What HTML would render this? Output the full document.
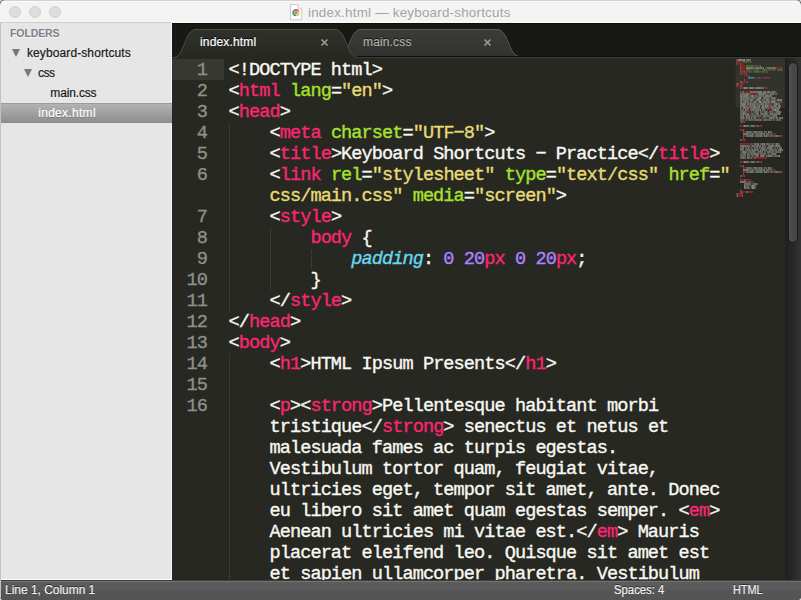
<!DOCTYPE html>
<html>
<head>
<meta charset="utf-8">
<style>
*{box-sizing:border-box;margin:0;padding:0}
html,body{width:801px;height:600px;overflow:hidden;background:#dcdcdc;font-family:"Liberation Sans",sans-serif;}
#win{position:absolute;left:0;top:0;width:801px;height:600px;overflow:hidden;border-radius:4px;background:#272822}
#titlebar{position:absolute;left:0;top:0;width:801px;height:23px;background:linear-gradient(#d2d2d2 0,#d2d2d2 1px,#fdfdfd 1px,#f4f4f4 2.5px,#f3f3f3 21px,#f8f8f8 22px);border-radius:5px 5px 0 0}
.light{position:absolute;top:6px;width:12px;height:12px;border-radius:50%;background:#dddddd;border:1px solid #d1d1d1}
#title{position:absolute;left:308px;top:4.5px;font-size:13.4px;line-height:16px;color:#a3a3a3;white-space:nowrap;letter-spacing:0.22px}
#docicon{position:absolute;left:290px;top:3.6px;width:13px;height:17px}
#sidebar{position:absolute;left:0;top:22px;width:172px;height:558px;border-top:1px solid #cdcdcd;background:#e6e6e6;border-right:1px solid #f6f6f6;border-bottom:1px solid #fafafa;box-shadow:inset 1px 0 0 #c8c8c8}
#sidebar .h{text-shadow:0 1px 0 rgba(255,255,255,.8);position:absolute;left:10px;top:3px;font-size:10.5px;font-weight:bold;color:#7b808a;line-height:14px;letter-spacing:-0.1px}
.row{position:absolute;left:0;width:171px;height:20px;font-size:12px;line-height:20px;color:#1a1a1a;white-space:nowrap;letter-spacing:0.1px;-webkit-text-stroke:0.2px currentColor}
.row.sel{background:linear-gradient(#b3b3b3,#8c8c8c);border-top:1px solid #9c9c9c;color:#fff;line-height:18px;text-shadow:0 1px 0 rgba(0,0,0,.25)}
.tri{position:absolute;width:0;height:0;border-left:4.7px solid transparent;border-right:4.7px solid transparent;border-top:8px solid #787878}
#tabbar{position:absolute;left:172px;top:23px;width:629px;height:35px;background:linear-gradient(#080806 0,#181914 1.5px)}
.tt{position:absolute;top:12px;font-size:12px;line-height:14px;white-space:nowrap;letter-spacing:0.15px;-webkit-text-stroke:0.2px currentColor}
#editor{position:absolute;left:172px;top:58px;width:629px;height:522px;background:#272822;overflow:hidden}
#gutterhl{position:absolute;left:0;top:1px;width:52px;height:21px;background:#373832}
.ln{position:absolute;left:0;width:35px;text-align:right;color:#8f908a}
pre,.ln{font-family:"Liberation Mono",monospace;font-size:18.6px;letter-spacing:-0.932px;line-height:21px;-webkit-text-stroke:0.35px currentColor}
pre{position:absolute;left:56.6px;top:1.9px;color:#f8f8f2;white-space:pre}
.g{position:absolute;width:1px;background:repeating-linear-gradient(#4b4c46 0 1px,transparent 1px 2px)}
.t{color:#f92672}.a{color:#a6e22e}.s{color:#e6db74}.n{color:#ae81ff}.p{color:#66d9ef;font-style:italic}
#sbtrack{position:absolute;left:785px;top:58px;width:16px;height:522px;background:linear-gradient(90deg,#1f1f1e,#242424 30%,#343434)}
#sbthumb{position:absolute;left:788px;top:62px;width:10px;height:181px;border-radius:5px;background:linear-gradient(90deg,#555,#484848 40%,#464646);border:1px solid #1b1b1b}
#status{position:absolute;left:0;top:580px;width:801px;height:20px;background:linear-gradient(#727272 0,#727272 1px,#5c5c5c 1px,#5a5a5a 9px,#555 10px,#545454 19px);border-top:1px solid #3c3c3a;color:#f4f4f4;font-size:12px;line-height:19px;text-shadow:0 -1px 0 rgba(0,0,0,.55);-webkit-text-stroke:0.15px currentColor}
#status span{position:absolute;top:0;white-space:nowrap;transform-origin:0 50%;font-size:12.5px}
</style>
</head>
<body>
<div id="win">
 <div id="titlebar">
  <div class="light" style="left:9px"></div>
  <div class="light" style="left:29px"></div>
  <div class="light" style="left:49px"></div>
  <svg id="docicon" viewBox="0 0 13 17" width="13" height="17"><path d="M0.6 0.6h7.2l4 4v11.2h-11.2z" fill="#fdfdfd" stroke="#c9c9c9" stroke-width="1"/><path d="M7.8 0.6v4h4" fill="#f0f0f0" stroke="#c9c9c9" stroke-width="0.8"/><path d="M6.00 8.60L2.80 6.75A3.70 3.70 0 0 1 9.20 6.75Z" fill="#e0493a"/><path d="M6.00 8.60L9.20 6.75A3.70 3.70 0 0 1 6.00 12.30Z" fill="#f4c63a"/><path d="M6.00 8.60L6.00 12.30A3.70 3.70 0 0 1 2.80 6.75Z" fill="#4c9a4a"/><circle cx="6.0" cy="8.6" r="1.9" fill="#f4f4f4"/><circle cx="6.0" cy="8.6" r="1.4" fill="#4a8fe0"/></svg>
  <div id="title">index.html — keyboard-shortcuts</div>
 </div>
 <div id="sidebar">
  <div class="h">FOLDERS</div>
  <div class="row" style="top:20px"><i class="tri" style="left:12.2px;top:6px"></i><span style="position:absolute;left:27px">keyboard-shortcuts</span></div>
  <div class="row" style="top:40px"><i class="tri" style="left:24px;top:6px"></i><span style="position:absolute;left:38px;letter-spacing:-0.55px">css</span></div>
  <div class="row" style="top:60px"><span style="position:absolute;left:50.3px;letter-spacing:-0.15px">main.css</span></div>
  <div class="row sel" style="top:80px;left:1px;width:171px"><span style="position:absolute;left:37.2px;letter-spacing:0.3px">index.html</span></div>
 </div>
 <div id="tabbar">
  <svg width="629" height="35" viewBox="172 23 629 35" style="position:absolute;left:0;top:0">
   <defs>
    <linearGradient id="gi" x1="0" y1="0" x2="0" y2="1"><stop offset="0" stop-color="#3b3b38"/><stop offset="1" stop-color="#323230"/></linearGradient>
    <linearGradient id="ga" x1="0" y1="0" x2="0" y2="1"><stop offset="0" stop-color="#30312b"/><stop offset="1" stop-color="#272822"/></linearGradient>
   </defs>
   <path d="M338 56.5 C350 56.5 349 29.5 361 29.5 L497 29.5 C509 29.5 508 56.5 520 56.5 Z" fill="url(#gi)" stroke="#5a5a56" stroke-width="1"/>
   <rect x="172" y="56" width="629" height="1" fill="#0f100c"/>
   <rect x="172" y="57" width="629" height="1" fill="#3a3b35"/>
   <path d="M173 57.5 C185 57.5 184 29.5 196 29.5 L335 29.5 C347 29.5 346 57.5 358 57.5 L358 58 L173 58 Z" fill="url(#ga)"/>
   <path d="M173 57.5 C185 57.5 184 29.5 196 29.5 L335 29.5 C347 29.5 346 57.5 358 57.5" fill="none" stroke="#4c4d47" stroke-width="1"/>
   <g stroke="#9b9b95" stroke-width="1.7" stroke-linecap="butt"><path d="M321.5 39.5l6 6m0-6l-6 6"/><path d="M484.5 39.5l6 6m0-6l-6 6"/></g>
  </svg>
  <div class="tt" style="left:28px;color:#fff;text-shadow:0 -1px 0 #000">index.html</div>
  <div class="tt" style="left:191px;color:#aeaea8;text-shadow:0 -1px 0 #111">main.css</div>
 </div>
 <div id="editor">
  <div id="gutterhl"></div>
  <i class="g" style="left:57px;top:66px;height:188px"></i><i class="g" style="left:98px;top:171px;height:62px"></i><i class="g" style="left:139px;top:192px;height:20px"></i><i class="g" style="left:57px;top:296px;height:227px"></i>
  <div id="lns"><div class="ln" style="top:1.9px">1</div><div class="ln" style="top:22.9px">2</div><div class="ln" style="top:43.9px">3</div><div class="ln" style="top:64.9px">4</div><div class="ln" style="top:85.9px">5</div><div class="ln" style="top:106.9px">6</div><div class="ln" style="top:148.9px">7</div><div class="ln" style="top:169.9px">8</div><div class="ln" style="top:190.9px">9</div><div class="ln" style="top:211.9px">10</div><div class="ln" style="top:232.9px">11</div><div class="ln" style="top:253.9px">12</div><div class="ln" style="top:274.9px">13</div><div class="ln" style="top:295.9px">14</div><div class="ln" style="top:316.9px">15</div><div class="ln" style="top:337.9px">16</div></div>
<pre>&lt;!DOCTYPE html&gt;
&lt;<span class="t">html</span> <span class="a">lang</span>=<span class="s">"en"</span>&gt;
&lt;<span class="t">head</span>&gt;
    &lt;<span class="t">meta</span> <span class="a">charset</span>=<span class="s">"UTF−8"</span>&gt;
    &lt;<span class="t">title</span>&gt;Keyboard Shortcuts − Practice&lt;/<span class="t">title</span>&gt;
    &lt;<span class="t">link</span> <span class="a">rel</span>=<span class="s">"stylesheet"</span> <span class="a">type</span>=<span class="s">"text/css"</span> <span class="a">href</span>=<span class="s">"</span>
<span class="s">    css/main.css"</span> <span class="a">media</span>=<span class="s">"screen"</span>&gt;
    &lt;<span class="t">style</span>&gt;
        <span class="t">body</span> {
            <span class="p">padding</span>: <span class="n">0</span> <span class="n">20</span><span class="t">px</span> <span class="n">0</span> <span class="n">20</span><span class="t">px</span>;
        }
    &lt;/<span class="t">style</span>&gt;
&lt;/<span class="t">head</span>&gt;
&lt;<span class="t">body</span>&gt;
    &lt;<span class="t">h1</span>&gt;HTML Ipsum Presents&lt;/<span class="t">h1</span>&gt;

    &lt;<span class="t">p</span>&gt;&lt;<span class="t">strong</span>&gt;Pellentesque habitant morbi
    tristique&lt;/<span class="t">strong</span>&gt; senectus et netus et
    malesuada fames ac turpis egestas.
    Vestibulum tortor quam, feugiat vitae,
    ultricies eget, tempor sit amet, ante. Donec
    eu libero sit amet quam egestas semper. &lt;<span class="t">em</span>&gt;
    Aenean ultricies mi vitae est.&lt;/<span class="t">em</span>&gt; Mauris
    placerat eleifend leo. Quisque sit amet est
    et sapien ullamcorper pharetra. Vestibulum
</pre>
 </div>
<svg id="minimap" width="66" height="150" viewBox="735 58 66 150" style="position:absolute;left:735px;top:58px">
<rect x="735.5" y="58.5" width="50" height="49.5" rx="2.5" fill="#32332d"/>
<path d="M736.4 59.9h0.9M746.9 59.9h0.9M748.8 59.9h1.9M736.4 61.9h0.9M745.9 61.9h0.9M750.6 61.9h0.9M736.4 63.9h0.9M741.1 63.9h0.9M740.2 65.9h0.9M752.5 65.9h0.9M760.1 65.9h0.9M740.2 67.9h0.9M745.9 67.9h0.9M752.5 67.9h0.9M758.2 67.9h1.9M762 67.9h0.9M767.8 67.9h0.9M770.6 67.9h1.9M774.4 67.9h1.9M781 67.9h0.9M740.2 69.9h0.9M748.8 69.9h0.9M765.9 69.9h0.9M781 69.9h0.9M758.2 71.9h0.9M766.8 71.9h0.9M740.2 73.9h0.9M745.9 73.9h0.9M748.8 75.9h0.9M744 79.9h0.9M740.2 81.9h1.9M746.9 81.9h0.9M736.4 83.9h1.9M742.1 83.9h0.9M736.4 85.9h0.9M741.1 85.9h0.9M740.2 87.9h0.9M743 87.9h0.9M755.4 87.9h0.9M760.1 87.9h0.9M762 87.9h1.9M765.9 87.9h0.9M740.2 91.9h0.9M742.1 91.9h1.9M749.7 91.9h0.9M752.5 91.9h1.9M756.4 91.9h0.9M765.9 91.9h1.9M769.6 91.9h0.9M773.4 91.9h0.9M775.4 91.9h0.9M740.2 93.9h2.8M744 93.9h1.9M748.8 93.9h1.9M756.4 93.9h0.9M763 93.9h0.9M767.8 93.9h0.9M771.5 93.9h0.9M776.3 93.9h0.9M742.1 95.9h0.9M749.7 95.9h0.9M758.2 95.9h0.9M760.1 95.9h0.9M762 95.9h0.9M768.7 95.9h0.9M743 97.9h1.9M746.9 97.9h0.9M750.6 97.9h0.9M752.5 97.9h1.9M755.4 97.9h0.9M763 97.9h0.9M766.8 97.9h0.9M768.7 97.9h0.9M771.5 97.9h1.9M741.1 99.9h3.8M745.9 99.9h0.9M752.5 99.9h0.9M755.4 99.9h0.9M760.1 99.9h0.9M763 99.9h1.9M768.7 99.9h0.9M773.4 99.9h0.9M743 101.9h1.9M746.9 101.9h0.9M750.6 101.9h1.9M756.4 101.9h0.9M766.8 101.9h0.9M775.4 101.9h0.9M778.2 101.9h0.9M781 101.9h0.9M747.8 103.9h3.8M752.5 103.9h0.9M757.3 103.9h0.9M760.1 103.9h1.9M766.8 103.9h0.9M768.7 103.9h1.9M772.5 103.9h0.9M777.2 103.9h1.9M741.1 105.9h0.9M744.9 105.9h0.9M746.9 105.9h0.9M749.7 105.9h0.9M751.6 105.9h1.9M757.3 105.9h0.9M763.9 105.9h0.9M770.6 105.9h1.9M776.3 105.9h0.9M780.1 105.9h0.9M741.1 107.9h0.9M745.9 107.9h0.9M750.6 107.9h1.9M756.4 107.9h0.9M759.2 107.9h0.9M763.9 107.9h0.9M765.9 107.9h1.9M773.4 107.9h1.9M777.2 107.9h0.9M741.1 109.9h0.9M743 109.9h0.9M745.9 109.9h0.9M747.8 109.9h0.9M754.4 109.9h0.9M758.2 109.9h0.9M766.8 109.9h0.9M771.5 109.9h0.9M741.1 111.9h1.9M744.9 111.9h1.9M750.6 111.9h0.9M754.4 111.9h0.9M757.3 111.9h0.9M761.1 111.9h1.9M766.8 111.9h0.9M770.6 111.9h0.9M772.5 111.9h0.9M740.2 113.9h0.9M742.1 113.9h0.9M745.9 113.9h0.9M751.6 113.9h2.8M758.2 113.9h0.9M760.1 113.9h1.9M763.9 113.9h0.9M767.8 113.9h0.9M773.4 113.9h0.9M777.2 113.9h0.9M741.1 115.9h0.9M744.9 115.9h0.9M750.6 115.9h0.9M752.5 115.9h1.9M758.2 115.9h0.9M760.1 115.9h0.9M765.9 115.9h3.8M771.5 115.9h0.9M740.2 117.9h0.9M747.8 117.9h0.9M755.4 117.9h0.9M758.2 117.9h0.9M764.9 117.9h0.9M768.7 117.9h0.9M781 117.9h0.9M740.2 119.9h1.9M743 119.9h0.9M744.9 119.9h0.9M747.8 119.9h0.9M749.7 119.9h0.9M751.6 119.9h0.9M756.4 119.9h0.9M758.2 119.9h0.9M761.1 119.9h0.9M763 119.9h0.9M765.9 119.9h2.8M769.6 119.9h0.9M774.4 119.9h0.9M776.3 119.9h0.9M778.2 119.9h1.9M741.1 121.9h1.9M744 121.9h0.9M740.2 125.9h0.9M743 125.9h0.9M748.8 125.9h0.9M754.4 125.9h0.9M757.3 125.9h1.9M761.1 125.9h0.9M740.2 129.9h0.9M743 129.9h0.9M743 131.9h0.9M745.9 131.9h0.9M748.8 131.9h0.9M752.5 131.9h0.9M760.1 131.9h0.9M762 131.9h0.9M764.9 131.9h1.9M770.6 131.9h0.9M748.8 133.9h0.9M750.6 133.9h0.9M753.5 133.9h0.9M757.3 133.9h0.9M759.2 133.9h0.9M762 133.9h0.9M766.8 133.9h2.8M770.6 133.9h1.9M774.4 133.9h0.9M743 135.9h0.9M745.9 135.9h0.9M747.8 135.9h1.9M754.4 135.9h1.9M758.2 135.9h0.9M762 135.9h0.9M766.8 135.9h1.9M773.4 135.9h1.9M779.1 135.9h1.9M743 137.9h0.9M740.2 139.9h1.9M744 139.9h0.9M740.2 143.9h0.9M750.6 143.9h1.9M753.5 143.9h0.9M756.4 143.9h0.9M760.1 143.9h0.9M767.8 143.9h0.9M769.6 143.9h0.9M772.5 143.9h1.9M778.2 143.9h0.9M745.9 145.9h0.9M747.8 145.9h0.9M749.7 145.9h0.9M753.5 145.9h0.9M755.4 145.9h0.9M758.2 145.9h0.9M763 145.9h2.8M768.7 145.9h0.9M741.1 147.9h0.9M744.9 147.9h0.9M748.8 147.9h0.9M751.6 147.9h0.9M753.5 147.9h0.9M755.4 147.9h1.9M760.1 147.9h1.9M764.9 147.9h0.9M775.4 147.9h0.9M781 147.9h0.9M743 149.9h0.9M744.9 149.9h1.9M748.8 149.9h0.9M753.5 149.9h0.9M756.4 149.9h1.9M761.1 149.9h0.9M763.9 149.9h0.9M770.6 149.9h0.9M773.4 149.9h1.9M776.3 149.9h0.9M748.8 151.9h0.9M750.6 151.9h1.9M757.3 151.9h1.9M761.1 151.9h0.9M764.9 151.9h0.9M769.6 151.9h3.8M777.2 151.9h2.8M740.2 153.9h0.9M742.1 153.9h1.9M748.8 153.9h0.9M752.5 153.9h0.9M760.1 153.9h0.9M762 153.9h1.9M768.7 153.9h0.9M770.6 153.9h0.9M773.4 153.9h0.9M740.2 155.9h0.9M742.1 155.9h0.9M744 155.9h0.9M747.8 155.9h2.8M752.5 155.9h1.9M758.2 155.9h0.9M766.8 155.9h0.9M774.4 155.9h0.9M776.3 155.9h1.9M741.1 157.9h0.9M744 157.9h0.9M748.8 157.9h0.9M750.6 157.9h1.9M753.5 157.9h2.8M765.9 157.9h0.9M740.2 161.9h0.9M743 161.9h0.9M748.8 161.9h0.9M754.4 161.9h0.9M757.3 161.9h1.9M761.1 161.9h0.9M740.2 165.9h0.9M743 165.9h0.9M743 167.9h0.9M745.9 167.9h0.9M748.8 167.9h0.9M752.5 167.9h0.9M760.1 167.9h0.9M762 167.9h0.9M764.9 167.9h1.9M770.6 167.9h0.9M748.8 169.9h0.9M750.6 169.9h0.9M753.5 169.9h0.9M757.3 169.9h0.9M759.2 169.9h0.9M762 169.9h0.9M766.8 169.9h2.8M770.6 169.9h1.9M774.4 169.9h0.9M743 171.9h0.9M745.9 171.9h0.9M747.8 171.9h1.9M754.4 171.9h1.9M758.2 171.9h0.9M762 171.9h0.9M766.8 171.9h1.9M773.4 171.9h1.9M779.1 171.9h1.9M743 173.9h0.9M740.2 175.9h1.9M744 175.9h0.9M740.2 179.9h0.9M744 179.9h1.9M749.7 179.9h0.9M745.9 181.9h0.9M748.8 181.9h0.9M752.5 181.9h0.9M744.9 183.9h0.9M747.8 183.9h0.9M753.5 183.9h0.9M744.9 185.9h0.9M746.9 185.9h0.9M745.9 187.9h0.9M748.8 187.9h0.9M740.2 189.9h0.9M740.2 191.9h1.9M745.9 191.9h2.8M751.6 191.9h0.9M736.4 193.9h1.9M742.1 193.9h0.9M736.4 195.9h1.9M742.1 195.9h0.9" stroke="#f8f8f2" stroke-opacity="0.36" stroke-width="1.5" fill="none"/>
<path d="M737.4 59.9h0.9M764.9 67.9h0.9M754.4 77.9h0.9M768.7 77.9h0.9M771.5 95.9h0.9M761.1 97.9h0.9M775.4 97.9h0.9M753.5 99.9h0.9M769.6 99.9h0.9M775.4 99.9h0.9M776.3 101.9h0.9M767.8 103.9h0.9M760.1 105.9h0.9M768.7 107.9h0.9M748.8 109.9h0.9M764.9 109.9h0.9M751.6 111.9h0.9M767.8 111.9h0.9M773.4 111.9h0.9M748.8 113.9h0.9M780.1 113.9h0.9M761.1 115.9h0.9M756.4 117.9h0.9M771.5 119.9h0.9M740.2 121.9h0.9M771.5 131.9h0.9M769.6 133.9h0.9M778.2 135.9h0.9M779.1 143.9h0.9M765.9 145.9h0.9M780.1 145.9h0.9M772.5 147.9h0.9M766.8 149.9h0.9M740.2 151.9h0.9M755.4 151.9h0.9M781 151.9h0.9M765.9 153.9h0.9M763.9 155.9h0.9M749.7 157.9h0.9M771.5 167.9h0.9M769.6 169.9h0.9M778.2 171.9h0.9M750.6 183.9h0.9M757.3 183.9h0.9M748.8 185.9h0.9M755.4 185.9h0.9M749.7 187.9h0.9M755.4 187.9h0.9" stroke="#f8f8f2" stroke-opacity="0.22" stroke-width="1.5" fill="none"/>
<path d="M738.3 59.9h1.9M744 59.9h0.9M747.8 59.9h0.9M746.9 67.9h0.9M755.4 67.9h0.9M744 87.9h0.9M745.9 87.9h0.9M752.5 87.9h0.9M771.5 91.9h0.9M740.2 95.9h0.9M751.6 95.9h0.9M748.8 97.9h0.9M760.1 97.9h0.9M757.3 99.9h0.9M766.8 99.9h0.9M777.2 99.9h0.9M754.4 101.9h0.9M761.1 101.9h0.9M772.5 101.9h0.9M756.4 103.9h0.9M774.4 103.9h0.9M762 105.9h0.9M774.4 105.9h0.9M753.5 107.9h0.9M779.1 107.9h0.9M744.9 109.9h0.9M755.4 109.9h0.9M760.1 109.9h0.9M774.4 109.9h1.9M764.9 111.9h0.9M769.6 111.9h0.9M743 113.9h0.9M747.8 113.9h0.9M774.4 113.9h0.9M779.1 113.9h0.9M748.8 115.9h0.9M755.4 115.9h0.9M773.4 115.9h0.9M748.8 117.9h0.9M769.6 117.9h0.9M782 117.9h0.9M744 125.9h0.9M750.6 131.9h0.9M756.4 131.9h0.9M768.7 131.9h0.9M752.5 135.9h0.9M763.9 135.9h0.9M758.2 143.9h0.9M763.9 143.9h0.9M776.3 143.9h0.9M771.5 145.9h0.9M775.4 145.9h0.9M747.8 147.9h0.9M751.6 149.9h0.9M778.2 149.9h0.9M742.1 151.9h0.9M775.4 151.9h0.9M750.6 153.9h0.9M756.4 155.9h0.9M763 155.9h0.9M769.6 155.9h0.9M779.1 155.9h0.9M744 161.9h0.9M750.6 167.9h0.9M756.4 167.9h0.9M768.7 167.9h0.9M752.5 171.9h0.9M763.9 171.9h0.9M740.2 181.9h0.9M744 185.9h0.9M751.6 185.9h1.9M751.6 187.9h1.9" stroke="#f8f8f2" stroke-opacity="0.65" stroke-width="1.5" fill="none"/>
<path d="M740.2 59.9h3.8M745.9 59.9h0.9M747.8 67.9h4.8M753.5 67.9h0.9M756.4 67.9h1.9M760.1 67.9h1.9M763 67.9h0.9M766.8 67.9h0.9M768.7 67.9h1.9M772.5 67.9h1.9M744.9 87.9h0.9M746.9 87.9h0.9M748.8 87.9h3.8M754.4 87.9h0.9M756.4 87.9h3.8M761.1 87.9h0.9M750.6 91.9h1.9M754.4 91.9h1.9M757.3 91.9h4.8M763 91.9h2.8M767.8 91.9h1.9M772.5 91.9h0.9M774.4 91.9h0.9M743 93.9h0.9M745.9 93.9h2.8M758.2 93.9h4.8M763.9 93.9h1.9M766.8 93.9h0.9M769.6 93.9h1.9M772.5 93.9h1.9M775.4 93.9h0.9M741.1 95.9h0.9M743 95.9h5.7M750.6 95.9h0.9M752.5 95.9h1.9M755.4 95.9h1.9M759.2 95.9h0.9M761.1 95.9h0.9M763 95.9h0.9M764.9 95.9h3.8M769.6 95.9h1.9M740.2 97.9h2.8M744.9 97.9h1.9M747.8 97.9h0.9M751.6 97.9h0.9M754.4 97.9h0.9M757.3 97.9h2.8M763.9 97.9h2.8M767.8 97.9h0.9M770.6 97.9h0.9M773.4 97.9h1.9M740.2 99.9h0.9M744.9 99.9h0.9M746.9 99.9h1.9M749.7 99.9h2.8M756.4 99.9h0.9M758.2 99.9h1.9M762 99.9h0.9M765.9 99.9h0.9M767.8 99.9h0.9M771.5 99.9h1.9M774.4 99.9h0.9M778.2 99.9h3.8M740.2 101.9h1.9M744.9 101.9h1.9M747.8 101.9h0.9M749.7 101.9h0.9M753.5 101.9h0.9M755.4 101.9h0.9M758.2 101.9h2.8M763 101.9h3.8M767.8 101.9h1.9M770.6 101.9h1.9M773.4 101.9h1.9M740.2 103.9h5.7M746.9 103.9h0.9M751.6 103.9h0.9M753.5 103.9h1.9M759.2 103.9h0.9M762 103.9h1.9M764.9 103.9h1.9M775.4 103.9h1.9M779.1 103.9h0.9M740.2 105.9h0.9M742.1 105.9h2.8M745.9 105.9h0.9M748.8 105.9h0.9M750.6 105.9h0.9M753.5 105.9h2.8M758.2 105.9h1.9M763 105.9h0.9M764.9 105.9h3.8M769.6 105.9h0.9M773.4 105.9h0.9M775.4 105.9h0.9M778.2 105.9h1.9M740.2 107.9h0.9M743 107.9h2.8M746.9 107.9h1.9M749.7 107.9h0.9M752.5 107.9h0.9M754.4 107.9h1.9M757.3 107.9h1.9M761.1 107.9h2.8M764.9 107.9h0.9M767.8 107.9h0.9M770.6 107.9h2.8M775.4 107.9h1.9M778.2 107.9h0.9M740.2 109.9h0.9M742.1 109.9h0.9M746.9 109.9h0.9M750.6 109.9h3.8M756.4 109.9h1.9M759.2 109.9h0.9M762 109.9h2.8M772.5 109.9h1.9M776.3 109.9h2.8M740.2 111.9h0.9M743 111.9h1.9M753.5 111.9h0.9M755.4 111.9h1.9M758.2 111.9h0.9M760.1 111.9h0.9M763.9 111.9h0.9M765.9 111.9h0.9M771.5 111.9h0.9M775.4 111.9h5.7M741.1 113.9h0.9M744 113.9h1.9M746.9 113.9h0.9M750.6 113.9h0.9M755.4 113.9h2.8M762 113.9h1.9M764.9 113.9h2.8M769.6 113.9h3.8M775.4 113.9h1.9M778.2 113.9h0.9M740.2 115.9h0.9M742.1 115.9h1.9M745.9 115.9h2.8M751.6 115.9h0.9M754.4 115.9h0.9M757.3 115.9h0.9M759.2 115.9h0.9M763 115.9h2.8M769.6 115.9h0.9M772.5 115.9h0.9M774.4 115.9h2.8M741.1 117.9h3.8M745.9 117.9h1.9M750.6 117.9h1.9M753.5 117.9h1.9M770.6 117.9h3.8M775.4 117.9h2.8M779.1 117.9h1.9M745.9 119.9h0.9M748.8 119.9h0.9M750.6 119.9h0.9M752.5 119.9h0.9M754.4 119.9h1.9M757.3 119.9h0.9M759.2 119.9h1.9M763.9 119.9h1.9M768.7 119.9h0.9M770.6 119.9h0.9M773.4 119.9h0.9M777.2 119.9h0.9M780.1 119.9h0.9M744.9 125.9h3.8M750.6 125.9h3.8M756.4 125.9h0.9M746.9 131.9h1.9M749.7 131.9h0.9M753.5 131.9h2.8M758.2 131.9h1.9M761.1 131.9h0.9M763.9 131.9h0.9M767.8 131.9h0.9M769.6 131.9h0.9M743 133.9h5.7M749.7 133.9h0.9M751.6 133.9h1.9M755.4 133.9h1.9M758.2 133.9h0.9M760.1 133.9h1.9M763 133.9h1.9M765.9 133.9h0.9M746.9 135.9h0.9M749.7 135.9h2.8M756.4 135.9h1.9M759.2 135.9h2.8M764.9 135.9h1.9M768.7 135.9h0.9M770.6 135.9h1.9M775.4 135.9h2.8M754.4 143.9h1.9M757.3 143.9h0.9M761.1 143.9h2.8M765.9 143.9h1.9M768.7 143.9h0.9M771.5 143.9h0.9M775.4 143.9h0.9M777.2 143.9h0.9M740.2 145.9h5.7M746.9 145.9h0.9M748.8 145.9h0.9M751.6 145.9h1.9M754.4 145.9h0.9M756.4 145.9h1.9M759.2 145.9h1.9M762 145.9h0.9M767.8 145.9h0.9M769.6 145.9h1.9M772.5 145.9h1.9M776.3 145.9h3.8M740.2 147.9h0.9M742.1 147.9h1.9M745.9 147.9h0.9M750.6 147.9h0.9M754.4 147.9h0.9M757.3 147.9h0.9M759.2 147.9h0.9M762 147.9h2.8M766.8 147.9h5.7M774.4 147.9h0.9M777.2 147.9h0.9M779.1 147.9h1.9M740.2 149.9h2.8M746.9 149.9h1.9M749.7 149.9h0.9M752.5 149.9h0.9M754.4 149.9h1.9M758.2 149.9h0.9M760.1 149.9h0.9M762 149.9h1.9M764.9 149.9h1.9M768.7 149.9h1.9M771.5 149.9h1.9M775.4 149.9h0.9M779.1 149.9h3.8M743 151.9h3.8M747.8 151.9h0.9M749.7 151.9h0.9M752.5 151.9h2.8M759.2 151.9h1.9M762 151.9h0.9M763.9 151.9h0.9M766.8 151.9h2.8M773.4 151.9h0.9M776.3 151.9h0.9M780.1 151.9h0.9M741.1 153.9h0.9M744 153.9h1.9M746.9 153.9h1.9M751.6 153.9h0.9M753.5 153.9h5.7M761.1 153.9h0.9M763.9 153.9h1.9M767.8 153.9h0.9M771.5 153.9h1.9M774.4 153.9h1.9M741.1 155.9h0.9M743 155.9h0.9M744.9 155.9h0.9M746.9 155.9h0.9M751.6 155.9h0.9M755.4 155.9h0.9M757.3 155.9h0.9M760.1 155.9h2.8M765.9 155.9h0.9M767.8 155.9h1.9M770.6 155.9h1.9M773.4 155.9h0.9M775.4 155.9h0.9M778.2 155.9h0.9M740.2 157.9h0.9M742.1 157.9h1.9M744.9 157.9h0.9M746.9 157.9h1.9M744.9 161.9h3.8M750.6 161.9h3.8M756.4 161.9h0.9M746.9 167.9h1.9M749.7 167.9h0.9M753.5 167.9h2.8M758.2 167.9h1.9M761.1 167.9h0.9M763.9 167.9h0.9M767.8 167.9h0.9M769.6 167.9h0.9M743 169.9h5.7M749.7 169.9h0.9M751.6 169.9h1.9M755.4 169.9h1.9M758.2 169.9h0.9M760.1 169.9h1.9M763 169.9h1.9M765.9 169.9h0.9M746.9 171.9h0.9M749.7 171.9h2.8M756.4 171.9h1.9M759.2 171.9h2.8M764.9 171.9h1.9M768.7 171.9h0.9M770.6 171.9h1.9M775.4 171.9h2.8M741.1 181.9h4.8M747.8 181.9h0.9M750.6 181.9h0.9M744 183.9h0.9M745.9 183.9h1.9M748.8 183.9h1.9M752.5 183.9h0.9M754.4 183.9h2.8M745.9 185.9h0.9M747.8 185.9h0.9M750.6 185.9h0.9M753.5 185.9h1.9M744 187.9h1.9M746.9 187.9h1.9M753.5 187.9h1.9" stroke="#f8f8f2" stroke-opacity="0.48" stroke-width="1.5" fill="none"/>
<path d="M737.4 61.9h3.8M737.4 63.9h3.8M741.1 65.9h3.8M741.1 67.9h4.8M776.3 67.9h4.8M741.1 69.9h3.8M741.1 73.9h4.8M744 75.9h3.8M760.1 77.9h1.9M766.8 77.9h1.9M742.1 81.9h4.8M738.3 83.9h3.8M737.4 85.9h3.8M741.1 87.9h1.9M763.9 87.9h1.9M741.1 91.9h0.9M744 91.9h5.7M750.6 93.9h5.7M779.1 101.9h1.9M770.6 103.9h1.9M767.8 109.9h3.8M746.9 111.9h3.8M759.2 117.9h0.9M742.1 119.9h0.9M743 121.9h0.9M741.1 125.9h1.9M759.2 125.9h1.9M741.1 129.9h1.9M744 131.9h1.9M772.5 133.9h1.9M744 135.9h1.9M781 135.9h1.9M742.1 139.9h1.9M741.1 143.9h9.5M752.5 143.9h0.9M752.5 157.9h0.9M756.4 157.9h9.5M741.1 161.9h1.9M759.2 161.9h1.9M741.1 165.9h1.9M744 167.9h1.9M772.5 169.9h1.9M744 171.9h1.9M781 171.9h1.9M742.1 175.9h1.9M741.1 179.9h2.8M745.9 179.9h3.8M742.1 191.9h3.8M748.8 191.9h2.8M738.3 193.9h3.8M738.3 195.9h3.8" stroke="#aa1a1e" stroke-opacity="0.92" stroke-width="1.6" fill="none"/>
<path d="M742.1 61.9h3.8M745.9 65.9h6.6M745.9 69.9h2.8M762 69.9h3.8M777.2 69.9h3.8M753.5 71.9h4.8M761.1 117.9h3.8" stroke="#7ad22a" stroke-opacity="0.5" stroke-width="1.2" fill="none"/>
<path d="M746.9 61.9h0.9M749.7 61.9h0.9M753.5 65.9h0.9M757.3 65.9h0.9M759.2 65.9h0.9M749.7 69.9h0.9M760.1 69.9h0.9M766.8 69.9h0.9M775.4 69.9h0.9M782 69.9h0.9M747.8 71.9h0.9M751.6 71.9h0.9M759.2 71.9h0.9M765.9 71.9h0.9M765.9 117.9h0.9M767.8 117.9h0.9" stroke="#d8cf80" stroke-opacity="0.14" stroke-width="1.4" fill="none"/>
<path d="M747.8 61.9h1.9M754.4 65.9h2.8M750.6 69.9h0.9M752.5 69.9h0.9M754.4 69.9h4.8M768.7 69.9h1.9M772.5 69.9h2.8M740.2 71.9h2.8M744.9 71.9h0.9M746.9 71.9h0.9M748.8 71.9h2.8M760.1 71.9h1.9M763 71.9h2.8" stroke="#d8cf80" stroke-opacity="0.32" stroke-width="1.4" fill="none"/>
<path d="M758.2 65.9h0.9M744 71.9h0.9M766.8 117.9h0.9" stroke="#d8cf80" stroke-opacity="0.43" stroke-width="1.4" fill="none"/>
<path d="M751.6 69.9h0.9M753.5 69.9h0.9M759.2 69.9h0.9M767.8 69.9h0.9M770.6 69.9h1.9M743 71.9h0.9M745.9 71.9h0.9M762 71.9h0.9" stroke="#d8cf80" stroke-opacity="0.24" stroke-width="1.4" fill="none"/>
<path d="M747.8 77.9h6.6" stroke="#5fc3e8" stroke-opacity="0.7" stroke-width="1.3" fill="none"/>
<path d="M756.4 77.9h0.9M758.2 77.9h1.9M763 77.9h0.9M764.9 77.9h1.9" stroke="#9b74e8" stroke-opacity="0.6" stroke-width="1.3" fill="none"/>
</svg>
 <div id="sbtrack"></div><div id="sbthumb"></div>
 <div style="position:absolute;left:0;top:23px;width:1px;height:577px;background:#c2c2c2;z-index:5"></div>
 <div id="status"><span style="left:5px;transform:scaleX(.955)">Line 1, Column 1</span><span style="left:614px;transform:scaleX(.905)">Spaces: 4</span><span style="left:732.5px;transform:scaleX(.87)">HTML</span></div>
</div>
</body>
</html>
